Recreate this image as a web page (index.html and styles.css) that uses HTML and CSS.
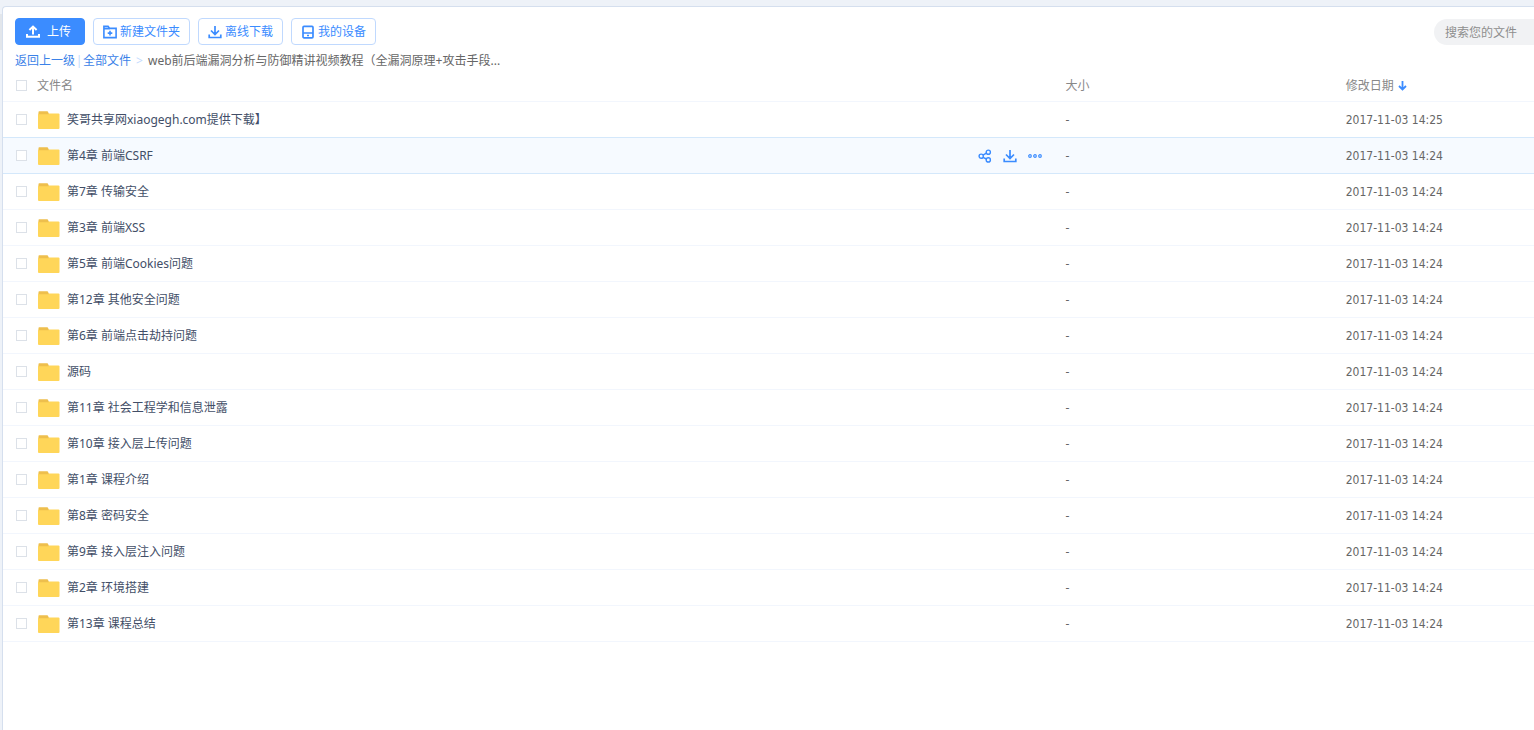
FILE: index.html
```html
<!DOCTYPE html>
<html lang="zh-CN">
<head>
<meta charset="utf-8">
<title>全部文件</title>
<link rel="stylesheet" href="styles.css">
</head>
<body>
<svg class="defs" aria-hidden="true">
  <symbol id="folder" viewBox="0 0 22 18">
    <rect x="0" y="2.5" width="21.5" height="15.5" rx="1" fill="#ffd659"/>
    <path d="M0.5 3.2V1q0-.7.7-.7h8q.7 0 .9.7l.6 1.5v.7z" fill="#eebf4d"/>
  </symbol>
  <symbol id="download" viewBox="0 0 14 14">
    <path d="M7 1v8M3 5.5l4 4 4-4M1.2 9.5v3h11.6v-3" fill="none" stroke="currentColor" stroke-width="1.7"/>
  </symbol>
</svg>
<main class="panel">
  <header class="toolbar">
    <button class="btn primary" type="button">
      <svg class="icon" viewBox="0 0 14 14"><path d="M7 9.5V2M3.4 5L7 1.6 10.6 5M1 9v2.8h12V9" fill="none" stroke="currentColor" stroke-width="2"/></svg>上传</button>
    <button class="btn" type="button">
      <svg class="icon" viewBox="0 0 14 14"><path d="M.9 12.6V1.4h4.2l1.6 2h6.4v9.2zM1 3.6h6M7 5.8v4.6M4.7 8.1h4.6" fill="none" stroke="currentColor" stroke-width="1.6"/></svg>新建文件夹</button>
    <button class="btn" type="button">
      <svg class="icon"><use href="#download"/></svg>离线下载</button>
    <button class="btn" type="button">
      <svg class="icon" viewBox="0 0 14 14"><rect x="2" y="1.4" width="10" height="11.4" rx="1" fill="none" stroke="currentColor" stroke-width="1.7"/><path d="M2 8h10M6 10.4h2" fill="none" stroke="currentColor" stroke-width="1.5"/></svg>我的设备</button>
    <input class="search" type="text" placeholder="搜索您的文件" aria-label="搜索您的文件">
  </header>
  <nav class="crumbs">
    <a href="#">返回上一级</a><span class="bar">|</span><a href="#">全部文件</a><span class="arrow">&gt;</span><span>web前后端漏洞分析与防御精讲视频教程（全漏洞原理+攻击手段...</span>
  </nav>
  <table class="files">
    <thead>
      <tr>
        <th class="name"><div class="cell"><input type="checkbox" class="check" aria-label="全选">文件名</div></th>
        <th class="size">大小</th>
        <th class="date"><div class="sort">修改日期<svg class="down" viewBox="0 0 9 10"><path d="M4.5 0v8M1 5l3.5 3.5L8 5" fill="none" stroke="currentColor" stroke-width="1.8"/></svg></div></th>
      </tr>
    </thead>
    <tbody id="rows"></tbody>
  </table>
</main>
<template id="row">
  <tr>
    <td><div class="cell"><input type="checkbox" class="check"><svg class="folder"><use href="#folder"/></svg><label class="title"></label></div></td>
    <td>-</td>
    <td class="time"></td>
  </tr>
</template>
<template id="actions">
  <div class="actions">
    <button type="button" aria-label="分享"><svg class="icon" viewBox="0 0 14 14" fill="none" stroke="currentColor" stroke-width="1.4"><circle cx="3.2" cy="7.2" r="2.1"/><circle cx="10.3" cy="3.2" r="2.1"/><circle cx="10.3" cy="10.9" r="2.1"/><path d="M5 6.2l3.4-2M5 8.3l3.4 1.7"/></svg></button>
    <button type="button" aria-label="下载"><svg class="icon"><use href="#download"/></svg></button>
    <button type="button" aria-label="更多"><svg class="icon" viewBox="0 0 14 14" fill="none" stroke="currentColor" stroke-width="1.2"><circle cx="2" cy="7" r="1.3"/><circle cx="7" cy="7" r="1.3"/><circle cx="12" cy="7" r="1.3"/></svg></button>
  </div>
</template>
<script src="app.js"></script>
</body>
</html>
```
FILE: styles.css
```css
* { box-sizing: border-box; }

body {
  margin: 0;
  background: #eef2f8;
  padding: 6px 0 0 2px;
  min-height: 100vh;
  display: flex;
  color: #666;
  font: 12px/18px "Noto Sans", "Noto Sans CJK SC", sans-serif;
}

body::before {
  content: "";
  position: absolute;
  left: 0;
  top: 14px;
  width: 2px;
  height: 36px;
  background: #e2e6eb;
}

.defs { position: absolute; width: 0; height: 0; }

.panel {
  flex: 1;
  min-width: 0;
  background: #fff;
  border: 1px solid #d5dfee;
  border-width: 1px 0 0 1px;
  border-top-left-radius: 4px;
}

button, input { font: inherit; }

.toolbar {
  display: flex;
  gap: 8px;
  padding: 11px 0 0 12px;
}

.btn {
  height: 27px;
  padding: 0 9px;
  display: flex;
  align-items: center;
  gap: 3px;
  border: 1px solid #c0d9fe;
  border-radius: 4px;
  background: #fff;
  color: #3b8cff;
  white-space: nowrap;
}

.primary {
  background: #3b8cff;
  border-color: #3b8cff;
  color: #fff;
  padding: 0 13px 0 10px;
  gap: 7px;
}

.icon { width: 14px; height: 14px; display: block; flex: none; }

.search {
  margin: 1px 0 0 auto;
  width: 100px;
  height: 26px;
  border: 0;
  border-radius: 13px 0 0 13px;
  padding: 0 0 0 11px;
  background: #f1f2f4;
}

.search::placeholder { color: #8e8e8e; }

.crumbs {
  display: flex;
  padding: 7px 12px 0;
  white-space: nowrap;
}

.crumbs a { color: #3b82e8; text-decoration: none; }
.bar { color: #c4dbfe; width: 8px; text-align: center; }
.arrow { color: #c4dbfe; width: 17px; text-align: center; }

.files {
  width: 100%;
  table-layout: fixed;
  border-spacing: 0;
}

th, td {
  height: 36px;
  padding: 0;
  border-bottom: 1px solid #f2f6fd;
  text-align: left;
  font-weight: 400;
}

th { height: 32px; color: #888; }
.name { width: 69.4%; }
.size { width: 18.3%; }

.cell {
  display: flex;
  align-items: center;
  padding-left: 13px;
}

.check {
  appearance: none;
  flex: none;
  width: 11px;
  height: 11px;
  margin: 0 10px 0 0;
  border: 1px solid #dce1e8;
  background: #fff;
}

.folder { width: 22px; height: 18px; margin: 0 7px 0 1px; flex: none; }
.title { color: #424e67; }
.time { font-family: "DejaVu Sans Condensed", "Noto Sans", sans-serif; }

.sort { display: flex; align-items: center; gap: 4px; }
.down { width: 9px; height: 10px; color: #3b8cff; }

.active td { background: #f6faff; }
.active td, tr:has(+ .active) td { border-bottom-color: #d4e8fb; }

.actions { margin-left: auto; display: flex; gap: 11px; padding-right: 24px; }
.actions button { padding: 0; border: 0; background: none; color: #3b8cff; }
```
FILE: app.js
```js
const names = [
  "笑哥共享网xiaogegh.com提供下载】", "第4章 前端CSRF", "第7章 传输安全", "第3章 前端XSS",
  "第5章 前端Cookies问题", "第12章 其他安全问题", "第6章 前端点击劫持问题", "源码",
  "第11章 社会工程学和信息泄露", "第10章 接入层上传问题", "第1章 课程介绍", "第8章 密码安全",
  "第9章 接入层注入问题", "第2章 环境搭建", "第13章 课程总结"
];
const rows = document.getElementById("rows");
names.forEach((name, i) => {
  const row = document.getElementById("row").content.cloneNode(true).firstElementChild;
  const label = row.querySelector("label");
  row.querySelector("input").id = label.htmlFor = "file" + i;
  label.textContent = name;
  row.lastElementChild.textContent = i ? "2017-11-03 14:24" : "2017-11-03 14:25";
  if (i === 1) {
    row.className = "active";
    row.querySelector(".cell").append(document.getElementById("actions").content.cloneNode(true));
  }
  rows.append(row);
});
```
